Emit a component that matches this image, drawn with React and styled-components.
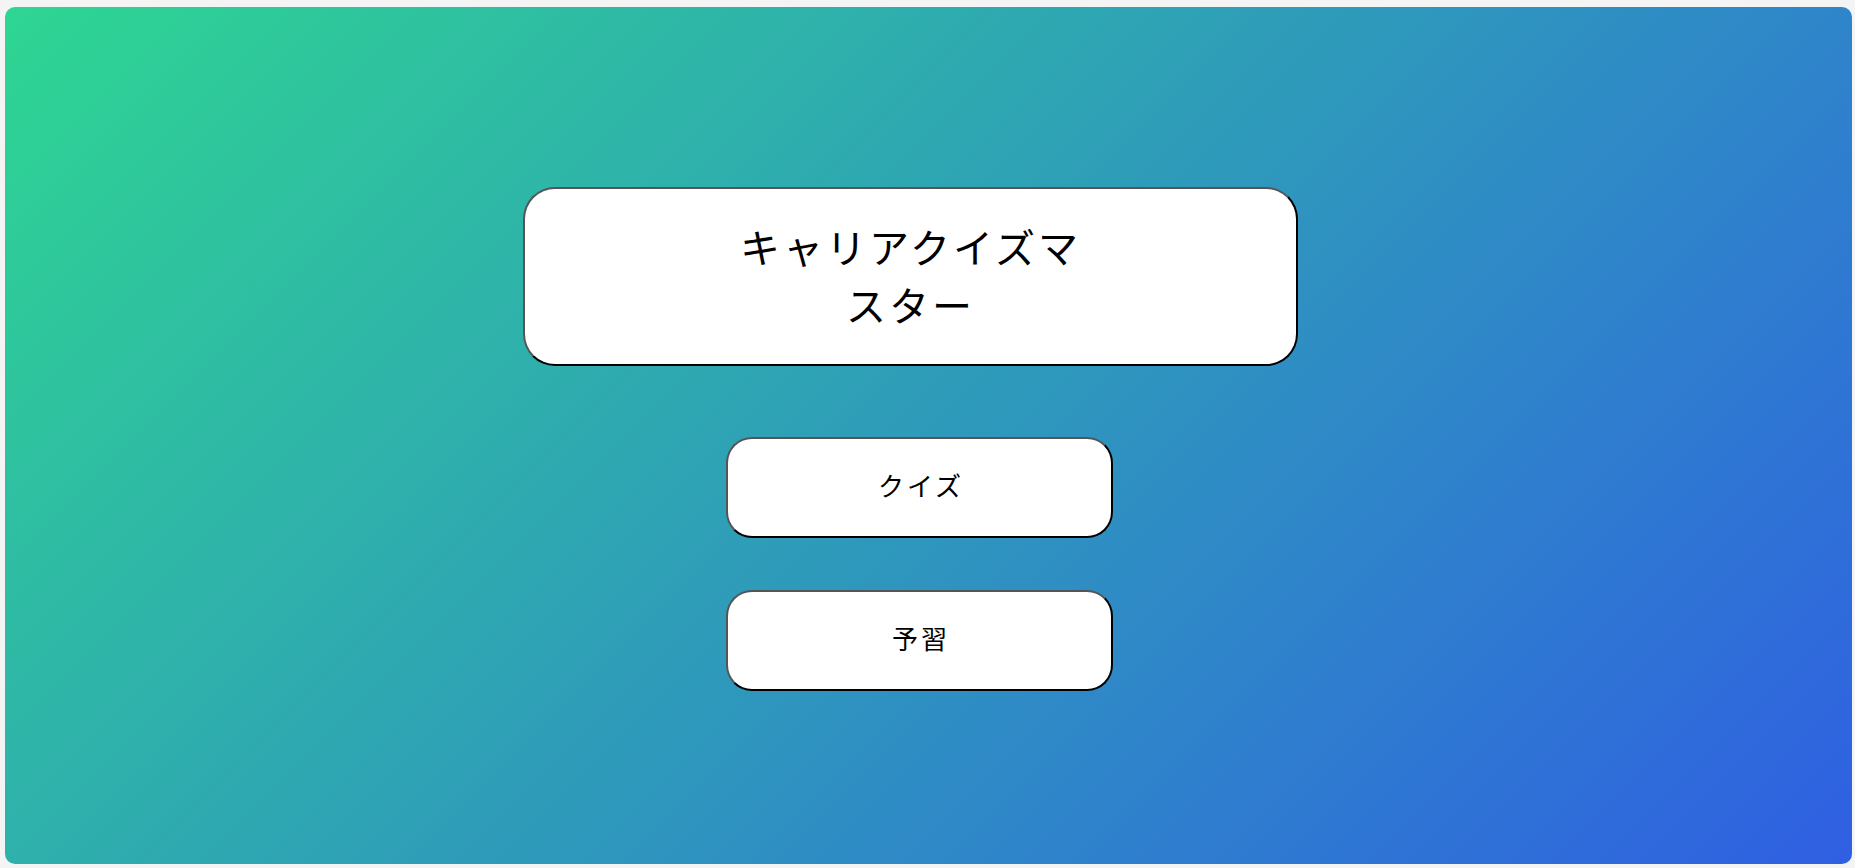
import React from "react";
import styled, { createGlobalStyle } from "styled-components";

const GlobalStyle = createGlobalStyle`
  html, body {
    margin: 0;
    padding: 0;
    background: #f4f4f4;
  }
  body {
    font-family: "Noto Sans CJK JP", "Noto Sans", sans-serif;
  }
`;

const Page = styled.div`
  padding: 7px 3px 4px 5px;
  box-sizing: border-box;
`;

const Stage = styled.main`
  height: 857px;
  border-radius: 10px;
  background: linear-gradient(135deg, #2ed692 0%, #2f5fe3 100%);
  display: flex;
  flex-direction: column;
  align-items: center;
  padding-top: 180px;
  box-sizing: border-box;
`;

const TitleCard = styled.div`
  width: 775px;
  height: 179px;
  margin-right: 36px;
  box-sizing: border-box;
  background: #ffffff;
  border: 2px solid;
  border-color: #555 #000 #000 #555;
  border-radius: 32px;
  display: flex;
  align-items: center;
  justify-content: center;
`;

const Title = styled.h1`
  margin: 0 0 4px 0;
  max-width: 380px;
  font-family: "Noto Sans CJK JP", sans-serif;
  font-weight: 400;
  font-size: 40px;
  line-height: 58px;
  letter-spacing: 3px;
  text-align: center;
  color: #000;
`;

const Menu = styled.nav`
  display: flex;
  flex-direction: column;
  align-items: center;
  gap: 52px;
  margin-top: 71px;
  margin-right: 18px;
`;

const MenuButton = styled.button`
  width: 387px;
  height: 101px;
  box-sizing: border-box;
  background: #ffffff;
  border: 2px solid;
  border-color: #555 #000 #000 #555;
  border-radius: 26px;
  font-family: "Noto Sans CJK JP", sans-serif;
  font-weight: 400;
  font-size: 26px;
  letter-spacing: 3px;
  color: #000;
  cursor: pointer;
  padding: 0 0 6px 3px;
`;

export default function App() {
  return (
    <>
      <GlobalStyle />
      <Page>
        <Stage>
          <TitleCard>
            <Title>キャリアクイズマスター</Title>
          </TitleCard>
          <Menu>
            <MenuButton>クイズ</MenuButton>
            <MenuButton>予習</MenuButton>
          </Menu>
        </Stage>
      </Page>
    </>
  );
}
